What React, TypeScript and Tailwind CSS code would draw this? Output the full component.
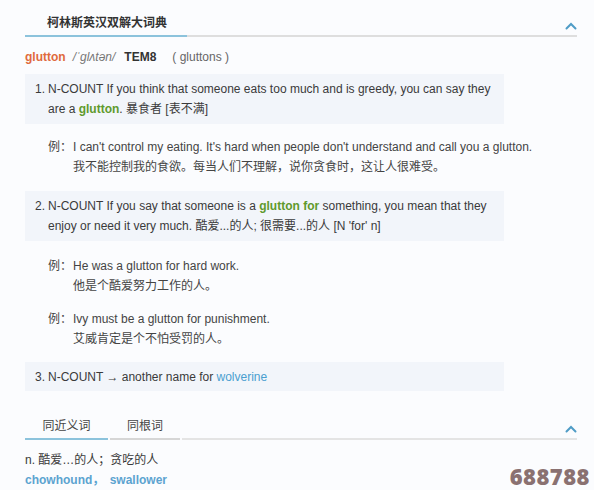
import React from "react";

const font = { fontFamily: '"Liberation Sans", "Noto Sans CJK SC", sans-serif' };

function Chevron() {
  return (
    <svg width="12" height="8" viewBox="0 0 12 8" className="absolute right-0 bottom-[7px]">
      <path d="M1.5 6.5 L6 2 L10.5 6.5" fill="none" stroke="#4f9cc6" strokeWidth="2" strokeLinecap="round" />
    </svg>
  );
}

function Example({ en, zh }: { en: React.ReactNode; zh: string }) {
  return (
    <div className="flex pl-[23px] text-[12px] leading-[20px] text-[#444]">
      <span className="w-[25px] shrink-0">例：</span>
      <div>
        <div>{en}</div>
        <div>{zh}</div>
      </div>
    </div>
  );
}

function Sense({ n, children }: { n: string; children: React.ReactNode }) {
  return (
    <div className="flex w-[479px] bg-[#f2f5fa] pl-[10px] pr-[8px] py-[5px] text-[12px] leading-[20px] text-[#3a3a3a]">
      <span className="w-[13px] shrink-0">{n}</span>
      <div>{children}</div>
    </div>
  );
}

export default function App() {
  return (
    <div style={font} className="relative h-[490px] w-[594px] overflow-hidden bg-[#fbfcfe] pl-[25px] pr-[17px] pt-[13px]">
      {/* header tab */}
      <div className="relative flex">
        <div className="w-[162px] border-b-2 border-[#8cc3dc] pb-[2px] pl-[22px] text-[12px] font-bold leading-[20px] text-[#333]">
          柯林斯英汉双解大词典
        </div>
        <div className="flex-1 border-b-2 border-[#dedede]" />
        <Chevron />
      </div>

      {/* headword */}
      <div className="mt-[10px] flex items-baseline text-[12px] leading-[20px]">
        <span className="font-bold text-[#e06a3c]">glutton</span>
        <span className="ml-[7px] italic text-[#777]">/ˈɡlʌtən/</span>
        <span className="ml-[9px] font-bold text-[#333]">TEM8</span>
        <span className="ml-[16px] text-[#666]">( gluttons )</span>
      </div>

      <div className="mt-[7px]">
        <Sense n="1.">
          N-COUNT If you think that someone eats too much and is greedy, you can say they are a{" "}
          <span className="font-bold text-[#5f9a2c]">glutton</span>. 暴食者 [表不满]
        </Sense>
      </div>

      <div className="mt-[13px]">
        <Example
          en="I can't control my eating. It's hard when people don't understand and call you a glutton."
          zh="我不能控制我的食欲。每当人们不理解，说你贪食时，这让人很难受。"
        />
      </div>

      <div className="mt-[14px]">
        <Sense n="2.">
          N-COUNT If you say that someone is a <span className="font-bold text-[#5f9a2c]">glutton for</span> something, you
          mean that they enjoy or need it very much. 酷爱...的人; 很需要...的人 [N 'for' n]
        </Sense>
      </div>

      <div className="mt-[15px]">
        <Example en="He was a glutton for hard work." zh="他是个酷爱努力工作的人。" />
      </div>
      <div className="mt-[13px]">
        <Example en="Ivy must be a glutton for punishment." zh="艾威肯定是个不怕受罚的人。" />
      </div>

      <div className="mt-[13px]">
        <div className="flex w-[479px] bg-[#f2f5fa] pl-[10px] py-[4.5px] text-[12px] leading-[20px] text-[#3a3a3a]">
          <span className="w-[13px] shrink-0">3.</span>
          <span>
            N-COUNT → another name for <span className="text-[#4a9fd0]">wolverine</span>
          </span>
        </div>
      </div>

      {/* tabs */}
      <div className="relative mt-[25px] flex text-[12px] leading-[20px] text-[#444]">
        <div className="w-[83px] border-b-2 border-[#8cc3dc] pb-[2px] text-center">同近义词</div>
        <div className="ml-[2px] w-[70px] border-b-2 border-[#d6d6d6] pb-[2px] text-center">同根词</div>
        <div className="ml-[2px] flex-1 border-b-2 border-[#e4e4e4]" />
        <Chevron />
      </div>

      <div className="mt-[10px] text-[12px] leading-[20px] text-[#3a3a3a]">n. 酷爱…的人；贪吃的人</div>
      <div className="text-[12px] font-bold leading-[20px] text-[#5ba3d0]">
        chowhound， <span className="ml-[2px]">swallower</span>
      </div>

      <div
        className="absolute bottom-[3px] right-[4px] text-[22px] font-extrabold leading-none tracking-[0.5px] text-[#8a7171]"
        style={{ fontFamily: '"Open Sans", sans-serif' }}
      >
        688788
      </div>
    </div>
  );
}
